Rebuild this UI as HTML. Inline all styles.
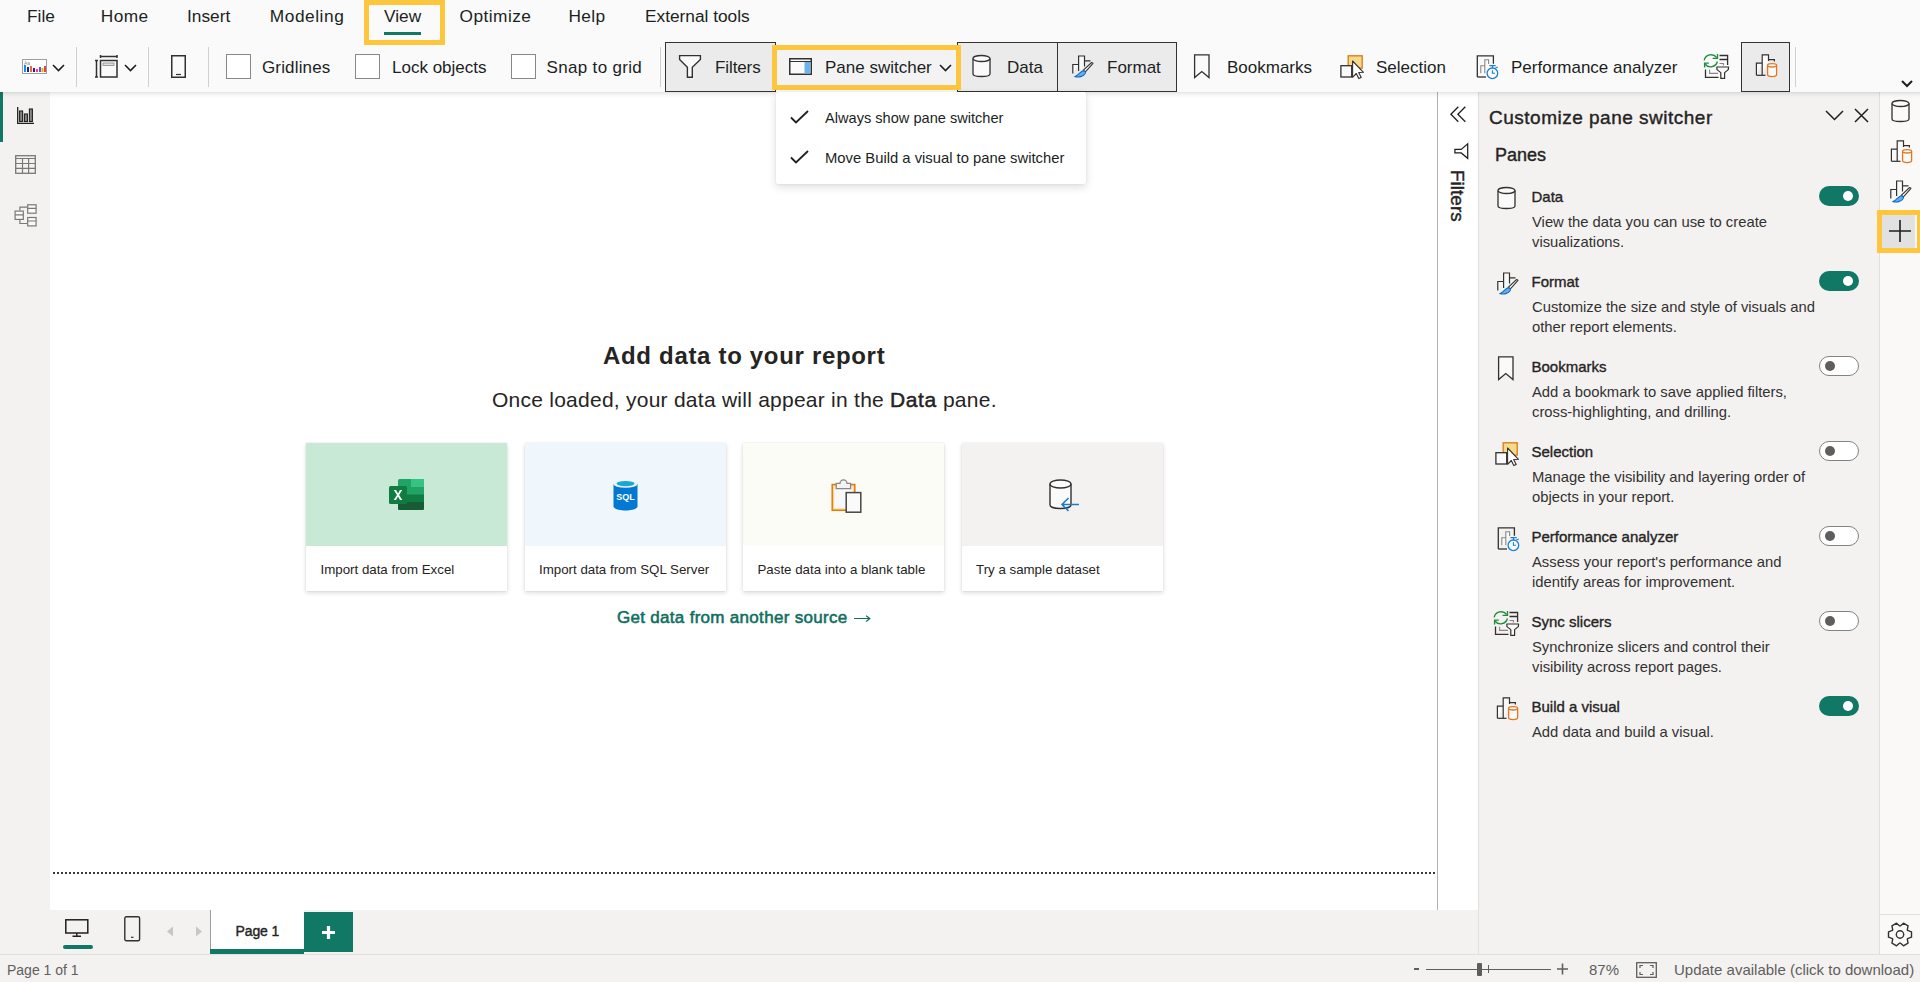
<!DOCTYPE html>
<html><head><meta charset="utf-8">
<style>
*{box-sizing:border-box;margin:0;padding:0}
html,body{width:1920px;height:982px;overflow:hidden;background:#f3f2f1;font-family:"Liberation Sans",sans-serif;color:#252423}
.a{position:absolute}
.t{position:absolute;white-space:nowrap;line-height:1}
.sb{font-weight:normal;-webkit-text-stroke:0.4px currentColor}
svg{position:absolute;overflow:visible}
#top{left:0;top:0;width:1920px;height:92px;background:#fafafa}
#shadow{left:0;top:92px;width:1920px;height:6px;background:linear-gradient(rgba(0,0,0,.11),rgba(0,0,0,.055) 30%,rgba(0,0,0,.02) 65%,rgba(0,0,0,0))}
.menu{font-size:17.3px;color:#201f1e;top:8.2px}
.rb{font-size:17px;color:#201f1e;top:59px}
.sep{position:absolute;top:47px;width:1px;height:40px;background:#d2d0ce}
.cb{position:absolute;top:54px;width:25px;height:25px;border:1px solid #8a8886;background:#fff}
.btn{position:absolute;top:42px;height:50px;background:#ebebeb;border:1.5px solid #333}
.yb{position:absolute;border:5px solid #fec63d}
#nav{left:0;top:92px;width:50px;height:818px;background:#f3f2f1}
#canvas{left:50px;top:92px;width:1387px;height:818px;background:#fff}
#fstrip{left:1437px;top:92px;width:41px;height:818px;background:#fff;border-left:1px solid #b3b0ad}
#pane{left:1478px;top:92px;width:402px;height:862px;background:#f3f2f1;border-left:1px solid #e1dfdd}
#rail{left:1879px;top:92px;width:41px;height:862px;background:#faf9f8;border-left:1px solid #e1dfdd}
#status{left:0;top:954px;width:1920px;height:28px;background:#f3f2f1;border-top:1px solid #e1dfdd}
.card{position:absolute;top:443px;width:201px;height:148px;background:#fff;box-shadow:0 2px 4.5px rgba(0,0,0,.14),0 0 1.5px rgba(0,0,0,.1)}
.card .top{position:absolute;left:0;top:0;width:100%;height:103px}
.card .lbl{position:absolute;left:14.5px;top:119.9px;font-size:13.3px;color:#252423;white-space:nowrap;line-height:1}
.pi-t{font-size:15px;font-weight:normal;-webkit-text-stroke:0.35px currentColor;color:#252423}
.pi-d{font-size:14.8px;color:#323130;line-height:20px;white-space:normal}
.tog{position:absolute;left:1819px;width:40px;height:20px;border-radius:10px}
.tog.on{background:#117865}
.tog.off{background:#fff;border:1px solid #858381}
.tog .k{position:absolute;width:10px;height:10px;border-radius:5px;top:4px}
.tog.on .k{background:#fff;left:24px;top:5px}
.tog.off .k{background:#605e5c;left:5px;top:4px}
</style></head><body>
<div id="top" class="a"></div>

<!-- Menu -->
<div class="t menu" style="left:27px">File</div>
<div class="t menu" style="left:100.8px;letter-spacing:0.4px">Home</div>
<div class="t menu" style="left:187px">Insert</div>
<div class="t menu" style="left:269.8px;letter-spacing:0.55px">Modeling</div>
<div class="t menu" style="left:384px">View</div>
<div class="t menu" style="left:459.6px;letter-spacing:0.45px">Optimize</div>
<div class="t menu" style="left:568.6px;letter-spacing:0.3px">Help</div>
<div class="t menu" style="left:645px">External tools</div>
<div class="yb" style="left:364px;top:0px;width:81px;height:45px"></div>
<div class="a" style="left:384px;top:32px;width:37px;height:3px;background:#117865"></div>

<!-- Ribbon -->
<svg style="left:22px;top:59px" width="26" height="15" viewBox="0 0 26 15">
<rect x="0.5" y="0.5" width="24" height="14" fill="#fff" stroke="#a19f9d"/>
<text x="2" y="6" font-size="5" fill="#888" font-family="Liberation Sans">Aa</text>
<rect x="2" y="6" width="2" height="7" fill="#118dff"/><rect x="5" y="8" width="2" height="5" fill="#12239e"/><rect x="8" y="7" width="2" height="6" fill="#e66c37"/><rect x="11" y="9" width="2" height="4" fill="#6b007b"/><rect x="14" y="10" width="2" height="3" fill="#e044a7"/><rect x="17" y="8" width="2" height="5" fill="#744ec2"/><rect x="19.5" y="9" width="2" height="4" fill="#d9b300"/><rect x="22" y="7" width="2" height="6" fill="#d64550"/>
</svg>
<svg style="left:52px;top:64px" width="13" height="8" viewBox="0 0 13 8"><path d="M1 1 L6.5 6.5 L12 1" fill="none" stroke="#201f1e" stroke-width="1.6"/></svg>
<div class="sep" style="left:76px"></div>
<svg style="left:95px;top:55px" width="23" height="23" viewBox="0 0 23 23">
<path d="M5.5 1.5H22M5.5 0V3M22 0V3" stroke="#323130" stroke-width="1.5" fill="none"/>
<path d="M1.5 5.5V22M0 5.5H3M0 22H3" stroke="#323130" stroke-width="1.5" fill="none"/>
<rect x="5.5" y="5.5" width="16.5" height="16.5" fill="#fafafa" stroke="#323130" stroke-width="1.5"/>
<rect x="8" y="8" width="11" height="2.5" fill="#e1dfdd" stroke="#8a8886" stroke-width="0.8"/>
</svg>
<svg style="left:124px;top:64px" width="13" height="8" viewBox="0 0 13 8"><path d="M1 1 L6.5 6.5 L12 1" fill="none" stroke="#201f1e" stroke-width="1.6"/></svg>
<div class="sep" style="left:148px"></div>
<svg style="left:171px;top:55px" width="15" height="23" viewBox="0 0 15 23"><rect x="0.75" y="0.75" width="13.5" height="21.5" fill="#fafafa" stroke="#323130" stroke-width="1.5"/><path d="M5 19.5H10" stroke="#323130" stroke-width="1.2"/></svg>
<div class="sep" style="left:208px"></div>
<div class="cb" style="left:226px"></div>
<div class="t rb" style="left:262px;letter-spacing:0.15px">Gridlines</div>
<div class="cb" style="left:355px"></div>
<div class="t rb" style="left:392px">Lock objects</div>
<div class="cb" style="left:511px"></div>
<div class="t rb" style="left:546.5px;letter-spacing:0.33px">Snap to grid</div>
<div class="sep" style="left:660px"></div>

<div class="btn" style="left:665px;width:111px"></div>
<svg style="left:672px;top:50px" width="36" height="32" viewBox="0 0 36 32"><path d="M7.6 5.6H28.4V9.4L20.3 17.3V27.3H15.4V17.3L7.6 9.4Z" fill="#fafafa" stroke="#323130" stroke-width="1.4"/></svg>
<div class="t rb" style="left:715px;letter-spacing:-0.1px">Filters</div>

<div class="btn" style="left:957px;width:101px"></div>
<div class="btn" style="left:1057px;width:120px"></div>
<div class="a" style="left:772px;top:45px;width:189px;height:45px;background:#f3f3f3"></div>
<div class="yb" style="left:772px;top:45px;width:189px;height:45px"></div>
<svg style="left:789px;top:58px" width="23" height="17" viewBox="0 0 23 17"><rect x="0.75" y="0.75" width="21.5" height="15.5" fill="#fafafa" stroke="#323130" stroke-width="1.5"/><path d="M0.75 3.5H22.25" stroke="#323130" stroke-width="1"/><rect x="15.5" y="4" width="6" height="11.5" fill="#6fb3ea"/></svg>
<div class="t rb" style="left:825px">Pane switcher</div>
<svg style="left:939px;top:64px" width="13" height="8" viewBox="0 0 13 8"><path d="M1 1 L6.5 6.5 L12 1" fill="none" stroke="#201f1e" stroke-width="1.6"/></svg>

<svg style="left:965px;top:47.5px" width="40" height="40" viewBox="0 0 40 40"><path d="M8 10.5V26C8 27.6 11.6 28.5 16.5 28.5S25 27.6 25 26V10.5" fill="#fafafa" stroke="#323130" stroke-width="1.3"/><ellipse cx="16.5" cy="10.5" rx="8.5" ry="3" fill="#fafafa" stroke="#323130" stroke-width="1.3"/></svg>
<div class="t rb" style="left:1007px">Data</div>

<svg style="left:1065px;top:43px" width="40" height="40" viewBox="0 0 40 40"><path d="M7.8 30.5V21.5H13.6M13.6 28V13H19.5V23.5M19.5 17.8H25.5" fill="#fafafa" stroke="#323130" stroke-width="1.2"/><path d="M28 20.3L26.6 19.5L18.2 27.4L20.4 28.8Z" fill="#fff" stroke="#323130" stroke-width="1.05" stroke-linejoin="round"/><path d="M10.2 33.6C13.5 34.6 18.5 33.6 20.2 30.6C21.2 28.7 19.5 27.6 17.8 28C15.2 28.6 14.3 31.6 10.2 33.6Z" fill="#66aef0" stroke="#0f6cbd" stroke-width="1.1"/></svg>
<div class="t rb" style="left:1107px">Format</div>

<svg style="left:1185.5px;top:38px" width="40" height="40" viewBox="0 0 40 40"><path d="M8.6 16.8H23V39.5L15.8 33.5L8.6 39.5Z" fill="#fafafa" stroke="#323130" stroke-width="1.3"/></svg>
<div class="t rb" style="left:1227px">Bookmarks</div>

<svg style="left:1335px;top:42.5px" width="40" height="40" viewBox="0 0 40 40"><rect x="13.2" y="12.8" width="14" height="12.3" fill="#f7d98b" stroke="#d87a16" stroke-width="1.3"/><rect x="5.9" y="22.7" width="10.8" height="11.3" fill="#fafafa" stroke="#323130" stroke-width="1.3"/><path d="M17.6 18V34.3L21.3 30.5L23.8 35.6L26.2 34.6L23.7 29.5L28.5 29.3Z" fill="#fff" stroke="#323130" stroke-width="1.1" stroke-linejoin="round"/></svg>
<div class="t rb" style="left:1376px">Selection</div>

<svg style="left:1468.5px;top:43px" width="40" height="40" viewBox="0 0 40 40"><path d="M8.3 34V12.8H24.4V20.8" fill="none" stroke="#323130" stroke-width="1.3"/><path d="M8.3 34H17" stroke="#323130" stroke-width="1.3"/><path d="M11.8 30.3V22.8H15.8V30.3M15.8 27V16.8H19.6V21" fill="#fafafa" stroke="#8a8886" stroke-width="1.1"/><circle cx="23.4" cy="30.3" r="5.3" fill="#fafafa" stroke="#1c82d4" stroke-width="1.3"/><path d="M23.4 27.3V30.3H26" fill="none" stroke="#1c82d4" stroke-width="1.1"/><path d="M20.4 22.6H26.7M23.5 22.6V25" stroke="#1c82d4" stroke-width="1.3"/><path d="M26.3 24.9L28.8 23.9" stroke="#1c82d4" stroke-width="1.1"/></svg>
<div class="t rb" style="left:1511px">Performance analyzer</div>

<svg style="left:1699.5px;top:43px" width="40" height="40" viewBox="0 0 40 40"><path d="M19.5 12.5H27.6V22M19.5 16.5H27" fill="none" stroke="#323130" stroke-width="1.3"/><path d="M19.5 20.5H23.4V22.5" fill="none" stroke="#8a8886" stroke-width="1.1"/><path d="M5.5 26.5V34.4H18.5" fill="none" stroke="#323130" stroke-width="1.3"/><path d="M9.6 26.8V30.4H18" fill="none" stroke="#8a8886" stroke-width="1.1"/><path d="M16.8 24H28.6L28.3 26.6L24.6 29.6V35.4H20.8V29.6L17 26.6Z" fill="#fafafa" stroke="#323130" stroke-width="1.2" stroke-linejoin="round"/><path d="M4.2 17.4A7 7 0 0 1 16.6 14.5M17.4 18.5A7 7 0 0 1 5 21" fill="none" stroke="#1e8b3a" stroke-width="1.35"/><path d="M17.5 11V15.4H12.6M4.6 24.6V20.1H8.8" fill="none" stroke="#1e8b3a" stroke-width="1.35"/></svg>

<div class="btn" style="left:1741px;width:49px"></div>
<svg style="left:1749px;top:42px" width="40" height="40" viewBox="0 0 40 40"><path d="M7.4 33.3V21.2H13.2M13.2 33.3V12.9H19.5V19M19.5 17.6H25.4V19.6" fill="#fafafa" stroke="#323130" stroke-width="1.2"/><path d="M7.4 33.3H16.5" stroke="#323130" stroke-width="1.2"/><path d="M18.6 23.3V32.5C18.6 33.8 20.8 34.6 23.1 34.6S27.6 33.8 27.6 32.5V23.3" fill="#fafafa" stroke="#e3751c" stroke-width="1.3"/><ellipse cx="23.1" cy="23.3" rx="4.5" ry="1.7" fill="#fafafa" stroke="#e3751c" stroke-width="1.3"/></svg>
<div class="sep" style="left:1795px"></div>
<svg style="left:1901px;top:80px" width="12" height="8" viewBox="0 0 12 8"><path d="M1 1L6 6L11 1" fill="none" stroke="#201f1e" stroke-width="2"/></svg>

<!-- Left nav -->
<div id="nav" class="a"></div>
<div class="a" style="left:0;top:92px;width:3px;height:50px;background:#117865"></div>
<svg style="left:17px;top:107px" width="17" height="17" viewBox="0 0 17 17"><path d="M0.7 0V16.3H17" fill="none" stroke="#201f1e" stroke-width="1.3"/><rect x="2.6" y="4" width="3" height="10.5" fill="#8a8886" stroke="#201f1e" stroke-width="1.1"/><rect x="7.4" y="7" width="3" height="7.5" fill="#8a8886" stroke="#201f1e" stroke-width="1.1"/><rect x="12.4" y="2" width="3" height="12.5" fill="#8a8886" stroke="#201f1e" stroke-width="1.1"/></svg>
<svg style="left:15px;top:155px" width="21" height="19" viewBox="0 0 21 19"><rect x="0.7" y="0.7" width="19.6" height="17.6" fill="#f3f2f1" stroke="#7a7876" stroke-width="1.3"/><path d="M0.7 3.5H20.3M0.7 8.5H20.3M0.7 13.4H20.3M7.5 3.5V18.3M13.6 3.5V18.3" stroke="#7a7876" stroke-width="1.2"/></svg>
<svg style="left:10px;top:198px" width="32" height="34" viewBox="0 0 32 34"><g fill="#f9f9f9" stroke="#7a7876" stroke-width="1.2"><path d="M9.9 12.5V9.2H17.1M9.9 22V25.5H17.1" fill="none"/><rect x="5.1" y="13.1" width="8.2" height="8.3"/><rect x="17.7" y="6.8" width="8.4" height="8.4"/><rect x="17.7" y="19.5" width="8.4" height="8.4"/><path d="M5.1 16.8H13.3M17.7 10.4H26.1M17.7 23H26.1"/></g></svg>

<!-- Canvas -->
<div id="canvas" class="a"></div>
<div class="a" style="left:53px;top:872px;width:1383px;height:2px;background:repeating-linear-gradient(90deg,#3b3a39 0 2px,transparent 2px 4px)"></div>
<div id="fstrip" class="a"></div>

<div class="t" style="left:603px;top:343.6px;font-size:24px;font-weight:bold;letter-spacing:0.68px;color:#252423">Add data to your report</div>
<div class="t" style="left:492px;top:389.2px;font-size:21px;letter-spacing:0.25px;color:#252423">Once loaded, your data will appear in the <span style="-webkit-text-stroke:0.5px #252423;letter-spacing:0.6px">Data</span> pane.</div>

<div class="card" style="left:306px"><div class="top" style="background:#c9e9d7"></div><div class="lbl">Import data from Excel</div></div>
<div class="card" style="left:524.5px"><div class="top" style="background:#eff6fc"></div><div class="lbl">Import data from SQL Server</div></div>
<div class="card" style="left:743px"><div class="top" style="background:#fcfcf6"></div><div class="lbl">Paste data into a blank table</div></div>
<div class="card" style="left:961.5px"><div class="top" style="background:#f3f2f1"></div><div class="lbl">Try a sample dataset</div></div>

<!-- excel icon -->
<svg style="left:389px;top:479px" width="36" height="32" viewBox="0 0 36 32">
<rect x="9" y="0" width="26" height="31" rx="1.5" fill="#21a366"/>
<rect x="22" y="0" width="13" height="8" fill="#33c481"/>
<rect x="22" y="8" width="13" height="7.5" fill="#21a366"/>
<rect x="9" y="15.5" width="26" height="7.5" fill="#107c41"/>
<path d="M9 23H35V29.5A1.5 1.5 0 0 1 33.5 31H10.5A1.5 1.5 0 0 1 9 29.5Z" fill="#185c37"/>
<rect x="0" y="7" width="18" height="18" rx="1.5" fill="#107c41"/>
<path d="M4.8 11L8 16L4.7 21H7L9 17.6L11 21H13.3L10.1 16L13.2 11H11L9 14.4L7.1 11Z" fill="#fff"/>
</svg>
<!-- sql icon -->
<svg style="left:613px;top:480px" width="25" height="31" viewBox="0 0 25 31">
<path d="M0.5 4V26.5C0.5 28.8 6 30.5 12.5 30.5S24.5 28.8 24.5 26.5V4Z" fill="#0078d4"/>
<ellipse cx="12.5" cy="4" rx="12" ry="3.8" fill="#e8f3fb"/>
<ellipse cx="12.5" cy="3.6" rx="9" ry="2.6" fill="#1ba8cf"/>
<text x="12.5" y="19.5" font-size="9" font-weight="bold" text-anchor="middle" fill="#fff" font-family="Liberation Sans">SQL</text>
</svg>
<!-- paste icon -->
<svg style="left:830px;top:479px" width="34" height="35" viewBox="0 0 34 35">
<rect x="2.2" y="5.5" width="22.6" height="25.8" fill="#fcd98a" stroke="#e07b10" stroke-width="1.5"/>
<rect x="4.2" y="7.5" width="18.6" height="21.8" fill="#f8f8f8"/>
<path d="M6.2 9.6V4.4H10A3.5 3.5 0 0 1 17 4.4H20.6V9.6Z" fill="#f3f3f3" stroke="#8a8886" stroke-width="1.3"/>
<rect x="16.2" y="13.6" width="14.6" height="19.6" fill="#fafafa" stroke="#484644" stroke-width="1.5"/>
</svg>
<!-- sample icon -->
<svg style="left:1049px;top:479px" width="32" height="33" viewBox="0 0 32 33">
<path d="M1 5V26C1 28 5.5 29.5 11.5 29.5S22 28 22 26V5" fill="#fafafa" stroke="#323130" stroke-width="1.4"/>
<ellipse cx="11.5" cy="5" rx="10.5" ry="4" fill="#fafafa" stroke="#323130" stroke-width="1.4"/>
<path d="M30 25.5H13M19.5 19L13 25.5L19.5 32" fill="none" stroke="#1c7dc4" stroke-width="1.6"/>
</svg>
<div class="t sb" style="left:617px;top:608.6px;font-size:17px;letter-spacing:0.3px;-webkit-text-stroke:0.55px #0f6e5e;color:#0f6e5e">Get data from another source</div>
<svg style="left:853px;top:614px" width="18" height="9" viewBox="0 0 18 9"><path d="M1 4.5H16.8M13.2 1.8L16.8 4.5L13.2 7.5" fill="none" stroke="#0f6e5e" stroke-width="1.2"/></svg>

<!-- Filters strip -->
<svg style="left:1450px;top:106px" width="17" height="17" viewBox="0 0 17 17"><path d="M8.3 0.7L0.9 8.2L8.3 15.7M15.3 0.7L7.9 8.2L15.3 15.7" fill="none" stroke="#201f1e" stroke-width="1.3"/></svg>
<svg style="left:1454px;top:143px" width="16" height="16" viewBox="0 0 16 16"><path d="M0.9 6.4H7.2L13.7 0.8V15.3L7.2 9.9H0.9Z" fill="none" stroke="#201f1e" stroke-width="1.25"/></svg>
<div class="t sb" style="left:1449px;top:170px;font-size:19px;color:#252423;transform-origin:0 0;transform:translate(18px,0) rotate(90deg)">Filters</div>

<!-- Pane -->
<div id="pane" class="a"></div>
<div class="t sb" style="left:1489px;top:108.1px;font-size:19px;letter-spacing:0.5px;color:#252423">Customize pane switcher</div>
<svg style="left:1825px;top:110px" width="19" height="11" viewBox="0 0 19 11"><path d="M1 1L9.5 9.5L18 1" fill="none" stroke="#201f1e" stroke-width="1.5"/></svg>
<svg style="left:1854px;top:108px" width="15" height="15" viewBox="0 0 15 15"><path d="M1 1L14 14M14 1L1 14" fill="none" stroke="#201f1e" stroke-width="1.5"/></svg>
<div class="t sb" style="left:1495px;top:145.8px;font-size:18px;color:#252423">Panes</div>

<div id="items"></div>
<svg style="left:1490px;top:180px" width="40" height="40" viewBox="0 0 40 40"><path d="M8 10.5V26C8 27.6 11.6 28.5 16.5 28.5S25 27.6 25 26V10.5" fill="#fafafa" stroke="#323130" stroke-width="1.3"/><ellipse cx="16.5" cy="10.5" rx="8.5" ry="3" fill="#fafafa" stroke="#323130" stroke-width="1.3"/></svg>
<div class="t pi-t" style="left:1531.5px;top:188.7px">Data</div>
<div class="t pi-d" style="left:1532px;top:212.2px">View the data you can use to create<br>visualizations.</div>
<div class="tog on" style="top:186px"><div class="k"></div></div>
<svg style="left:1490px;top:260px" width="40" height="40" viewBox="0 0 40 40"><path d="M7.8 30.5V21.5H13.6M13.6 28V13H19.5V23.5M19.5 17.8H25.5" fill="#fafafa" stroke="#323130" stroke-width="1.2"/><path d="M28 20.3L26.6 19.5L18.2 27.4L20.4 28.8Z" fill="#fff" stroke="#323130" stroke-width="1.05" stroke-linejoin="round"/><path d="M10.2 33.6C13.5 34.6 18.5 33.6 20.2 30.6C21.2 28.7 19.5 27.6 17.8 28C15.2 28.6 14.3 31.6 10.2 33.6Z" fill="#66aef0" stroke="#0f6cbd" stroke-width="1.1"/></svg>
<div class="t pi-t" style="left:1531.5px;top:273.7px">Format</div>
<div class="t pi-d" style="left:1532px;top:297.2px">Customize the size and style of visuals and<br>other report elements.</div>
<div class="tog on" style="top:271px"><div class="k"></div></div>
<svg style="left:1490px;top:340px" width="40" height="40" viewBox="0 0 40 40"><path d="M8.6 16.8H23V39.5L15.8 33.5L8.6 39.5Z" fill="#fafafa" stroke="#323130" stroke-width="1.3"/></svg>
<div class="t pi-t" style="left:1531.5px;top:358.7px">Bookmarks</div>
<div class="t pi-d" style="left:1532px;top:382.2px">Add a bookmark to save applied filters,<br>cross-highlighting, and drilling.</div>
<div class="tog off" style="top:356px"><div class="k"></div></div>
<svg style="left:1490px;top:430px" width="40" height="40" viewBox="0 0 40 40"><rect x="13.2" y="12.8" width="14" height="12.3" fill="#f7d98b" stroke="#d87a16" stroke-width="1.3"/><rect x="5.9" y="22.7" width="10.8" height="11.3" fill="#fafafa" stroke="#323130" stroke-width="1.3"/><path d="M17.6 18V34.3L21.3 30.5L23.8 35.6L26.2 34.6L23.7 29.5L28.5 29.3Z" fill="#fff" stroke="#323130" stroke-width="1.1" stroke-linejoin="round"/></svg>
<div class="t pi-t" style="left:1531.5px;top:443.7px">Selection</div>
<div class="t pi-d" style="left:1532px;top:467.2px">Manage the visibility and layering order of<br>objects in your report.</div>
<div class="tog off" style="top:441px"><div class="k"></div></div>
<svg style="left:1490px;top:515px" width="40" height="40" viewBox="0 0 40 40"><path d="M8.3 34V12.8H24.4V20.8" fill="none" stroke="#323130" stroke-width="1.3"/><path d="M8.3 34H17" stroke="#323130" stroke-width="1.3"/><path d="M11.8 30.3V22.8H15.8V30.3M15.8 27V16.8H19.6V21" fill="#fafafa" stroke="#8a8886" stroke-width="1.1"/><circle cx="23.4" cy="30.3" r="5.3" fill="#fafafa" stroke="#1c82d4" stroke-width="1.3"/><path d="M23.4 27.3V30.3H26" fill="none" stroke="#1c82d4" stroke-width="1.1"/><path d="M20.4 22.6H26.7M23.5 22.6V25" stroke="#1c82d4" stroke-width="1.3"/><path d="M26.3 24.9L28.8 23.9" stroke="#1c82d4" stroke-width="1.1"/></svg>
<div class="t pi-t" style="left:1531.5px;top:528.7px">Performance analyzer</div>
<div class="t pi-d" style="left:1532px;top:552.2px">Assess your report&#39;s performance and<br>identify areas for improvement.</div>
<div class="tog off" style="top:526px"><div class="k"></div></div>
<svg style="left:1490px;top:600px" width="40" height="40" viewBox="0 0 40 40"><path d="M19.5 12.5H27.6V22M19.5 16.5H27" fill="none" stroke="#323130" stroke-width="1.3"/><path d="M19.5 20.5H23.4V22.5" fill="none" stroke="#8a8886" stroke-width="1.1"/><path d="M5.5 26.5V34.4H18.5" fill="none" stroke="#323130" stroke-width="1.3"/><path d="M9.6 26.8V30.4H18" fill="none" stroke="#8a8886" stroke-width="1.1"/><path d="M16.8 24H28.6L28.3 26.6L24.6 29.6V35.4H20.8V29.6L17 26.6Z" fill="#fafafa" stroke="#323130" stroke-width="1.2" stroke-linejoin="round"/><path d="M4.2 17.4A7 7 0 0 1 16.6 14.5M17.4 18.5A7 7 0 0 1 5 21" fill="none" stroke="#1e8b3a" stroke-width="1.35"/><path d="M17.5 11V15.4H12.6M4.6 24.6V20.1H8.8" fill="none" stroke="#1e8b3a" stroke-width="1.35"/></svg>
<div class="t pi-t" style="left:1531.5px;top:613.7px">Sync slicers</div>
<div class="t pi-d" style="left:1532px;top:637.2px">Synchronize slicers and control their<br>visibility across report pages.</div>
<div class="tog off" style="top:611px"><div class="k"></div></div>
<svg style="left:1490px;top:685px" width="40" height="40" viewBox="0 0 40 40"><path d="M7.4 33.3V21.2H13.2M13.2 33.3V12.9H19.5V19M19.5 17.6H25.4V19.6" fill="#fafafa" stroke="#323130" stroke-width="1.2"/><path d="M7.4 33.3H16.5" stroke="#323130" stroke-width="1.2"/><path d="M18.6 23.3V32.5C18.6 33.8 20.8 34.6 23.1 34.6S27.6 33.8 27.6 32.5V23.3" fill="#fafafa" stroke="#e3751c" stroke-width="1.3"/><ellipse cx="23.1" cy="23.3" rx="4.5" ry="1.7" fill="#fafafa" stroke="#e3751c" stroke-width="1.3"/></svg>
<div class="t pi-t" style="left:1531.5px;top:698.7px">Build a visual</div>
<div class="t pi-d" style="left:1532px;top:722.2px">Add data and build a visual.</div>
<div class="tog on" style="top:696px"><div class="k"></div></div>


<!-- Rail -->
<div id="rail" class="a"></div>

<svg style="left:1884px;top:93px" width="40" height="40" viewBox="0 0 40 40"><path d="M8 10.5V26C8 27.6 11.6 28.5 16.5 28.5S25 27.6 25 26V10.5" fill="#fafafa" stroke="#323130" stroke-width="1.3"/><ellipse cx="16.5" cy="10.5" rx="8.5" ry="3" fill="#fafafa" stroke="#323130" stroke-width="1.3"/></svg>
<svg style="left:1884px;top:128px" width="40" height="40" viewBox="0 0 40 40"><path d="M7.4 33.3V21.2H13.2M13.2 33.3V12.9H19.5V19M19.5 17.6H25.4V19.6" fill="#fafafa" stroke="#323130" stroke-width="1.2"/><path d="M7.4 33.3H16.5" stroke="#323130" stroke-width="1.2"/><path d="M18.6 23.3V32.5C18.6 33.8 20.8 34.6 23.1 34.6S27.6 33.8 27.6 32.5V23.3" fill="#fafafa" stroke="#e3751c" stroke-width="1.3"/><ellipse cx="23.1" cy="23.3" rx="4.5" ry="1.7" fill="#fafafa" stroke="#e3751c" stroke-width="1.3"/></svg>
<svg style="left:1883px;top:168px" width="40" height="40" viewBox="0 0 40 40"><path d="M7.8 30.5V21.5H13.6M13.6 28V13H19.5V23.5M19.5 17.8H25.5" fill="#fafafa" stroke="#323130" stroke-width="1.2"/><path d="M28 20.3L26.6 19.5L18.2 27.4L20.4 28.8Z" fill="#fff" stroke="#323130" stroke-width="1.05" stroke-linejoin="round"/><path d="M10.2 33.6C13.5 34.6 18.5 33.6 20.2 30.6C21.2 28.7 19.5 27.6 17.8 28C15.2 28.6 14.3 31.6 10.2 33.6Z" fill="#66aef0" stroke="#0f6cbd" stroke-width="1.1"/></svg>
<div class="a" style="left:1882px;top:214px;width:33px;height:34px;background:#e1e1e1"></div>
<div class="yb" style="left:1877px;top:210px;width:45px;height:43px"></div>
<svg style="left:1889px;top:220px" width="22" height="22" viewBox="0 0 22 22"><path d="M11 0V22M0 11H22" stroke="#201f1e" stroke-width="1.6"/></svg>
<div class="a" style="left:1880px;top:914px;width:40px;height:1px;background:#e1dfdd"></div>
<svg style="left:1887.4px;top:921.8px" width="26" height="25" viewBox="0 0 26 25"><path d="M20.59 16.54 L24.50 15.15 L24.50 9.85 L20.59 8.46 L20.29 7.94 L21.05 3.87 L16.45 1.22 L13.30 3.91 L12.70 3.91 L9.55 1.22 L4.95 3.87 L5.71 7.94 L5.41 8.46 L1.50 9.85 L1.50 15.15 L5.41 16.54 L5.71 17.06 L4.95 21.13 L9.55 23.78 L12.70 21.09 L13.30 21.09 L16.45 23.78 L21.05 21.13 L20.29 17.06Z" fill="#faf9f8" stroke="#323130" stroke-width="1.4" stroke-linejoin="round"/><circle cx="13" cy="12.5" r="3.7" fill="none" stroke="#323130" stroke-width="1.4"/></svg>


<div id="shadow" class="a"></div>
<!-- Page tabs -->
<div id="status" class="a"></div>

<svg style="left:65px;top:919px" width="24" height="18" viewBox="0 0 24 18"><rect x="0.8" y="0.8" width="22" height="13.2" fill="none" stroke="#201f1e" stroke-width="1.5"/><path d="M11.8 14V17M7.5 17.2H16" stroke="#201f1e" stroke-width="1.4"/></svg>
<div class="a" style="left:63px;top:945px;width:30px;height:3.6px;background:#117865;border-radius:2px"></div>
<svg style="left:124px;top:916px" width="17" height="26" viewBox="0 0 17 26"><rect x="0.8" y="0.8" width="14.8" height="24" rx="1.5" fill="none" stroke="#323130" stroke-width="1.4"/><path d="M7 21.3H9.5" stroke="#323130" stroke-width="1.2"/></svg>
<svg style="left:166px;top:926px" width="8" height="11" viewBox="0 0 8 11"><path d="M7 0.5V10.5L1 5.5Z" fill="#c8c6c4"/></svg>
<svg style="left:195px;top:926px" width="8" height="11" viewBox="0 0 8 11"><path d="M1 0.5V10.5L7 5.5Z" fill="#c8c6c4"/></svg>
<div class="a" style="left:210px;top:910px;width:94px;height:44px;background:#fff;border-left:1px solid #a19f9d"></div>
<div class="a" style="left:210px;top:949px;width:94px;height:4.5px;background:#117865"></div>
<div class="t sb" style="left:235.5px;top:924.3px;font-size:14px;letter-spacing:-0.1px;color:#252423">Page 1</div>
<div class="a" style="left:304px;top:912px;width:49px;height:40px;background:#117865"></div>
<svg style="left:321px;top:925px" width="15" height="15" viewBox="0 0 15 15"><path d="M7.5 1V14M1 7.5H14" stroke="#fff" stroke-width="3.2"/></svg>
<div class="t" style="left:7px;top:962.6px;font-size:14px;color:#605e5c">Page 1 of 1</div>
<div class="a" style="left:1414px;top:968px;width:5px;height:2px;background:#605e5c"></div>
<div class="a" style="left:1426px;top:969px;width:125px;height:1px;background:#605e5c"></div>
<div class="a" style="left:1477px;top:963px;width:5px;height:13px;background:#605e5c;border-radius:1px"></div>
<div class="a" style="left:1488px;top:965px;width:1px;height:8px;background:#605e5c"></div>
<svg style="left:1557px;top:963px" width="11" height="12" viewBox="0 0 11 12"><path d="M5.5 0.5V11.5M0 6H11" stroke="#605e5c" stroke-width="1.6"/></svg>
<div class="t" style="left:1589px;top:962px;font-size:15px;color:#605e5c">87%</div>
<svg style="left:1636px;top:962px" width="21" height="16" viewBox="0 0 21 16"><rect x="0.7" y="0.7" width="19.6" height="14.6" fill="none" stroke="#605e5c" stroke-width="1.3"/><path d="M4 6V3.5H7M14 3.5H17V6M17 10V12.5H14M7 12.5H4V10" fill="none" stroke="#605e5c" stroke-width="1.2"/></svg>
<div class="t" style="left:1674px;top:962px;font-size:15px;color:#605e5c">Update available (click to download)</div>

<!-- dropdown -->
<div class="a" style="left:776px;top:92px;width:310px;height:92px;background:#fff;border-radius:2px;box-shadow:0 3px 8px rgba(0,0,0,.14),0 0 2px rgba(0,0,0,.08)"></div>
<svg style="left:790px;top:110px" width="19" height="14" viewBox="0 0 19 14"><path d="M1 7.5L6 12.5L18 1" fill="none" stroke="#201f1e" stroke-width="1.8"/></svg>
<div class="t" style="left:825px;top:111.3px;font-size:14.6px;color:#201f1e">Always show pane switcher</div>
<svg style="left:790px;top:150px" width="19" height="14" viewBox="0 0 19 14"><path d="M1 7.5L6 12.5L18 1" fill="none" stroke="#201f1e" stroke-width="1.8"/></svg>
<div class="t" style="left:825px;top:151.3px;font-size:14.8px;color:#201f1e">Move Build a visual to pane switcher</div>

</body></html>
